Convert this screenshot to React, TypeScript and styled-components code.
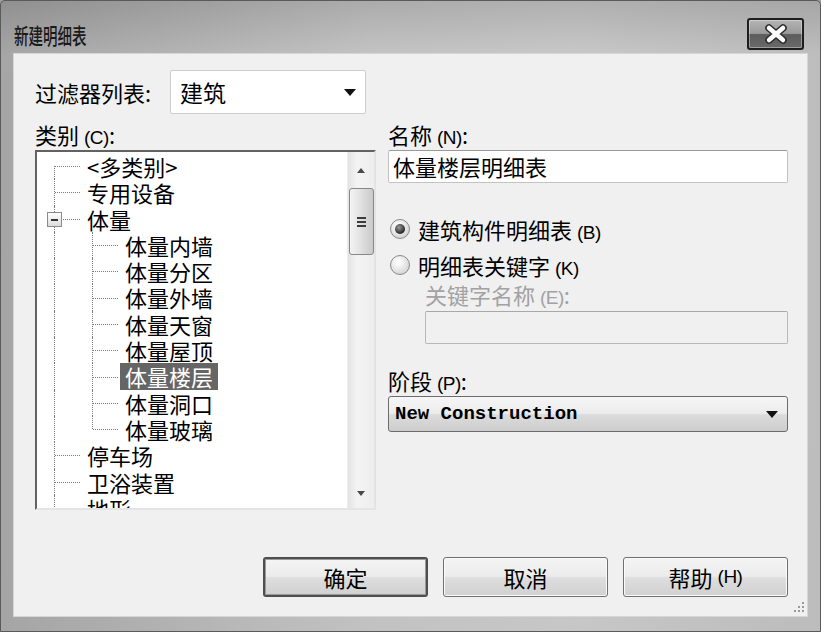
import React from "react";
import styled, { createGlobalStyle, css } from "styled-components";

const CJK = `"Noto Sans CJK SC", "Noto Sans", sans-serif`;

const GlobalStyle = createGlobalStyle`
  html, body { margin: 0; padding: 0; }
  body {
    width: 821px; height: 632px; overflow: hidden;
    background: #9c9c9c;
    font-family: ${CJK};
    color: #000;
  }
  * { box-sizing: border-box; }
`;

const Window = styled.div`
  width: 821px;
  height: 632px;
  display: flex;
  flex-direction: column;
  padding: 0 12px 14px;
  border: 1px solid #5a5a5a;
  border-radius: 5px 5px 0 0;
  background:
    linear-gradient(to bottom, rgba(0,0,0,0.10), rgba(255,255,255,0.06) 52px, rgba(255,255,255,0.05)),
    linear-gradient(to right, #a0a0a0 0%, #bfbfbf 45%, #c4c4c4 70%, #b9b9b9 100%);
`;

const TitleBar = styled.div`
  height: 52px;
  flex: none;
  display: flex;
  align-items: center;
  justify-content: space-between;
  padding: 14px 4px 0 1px;
`;

const TitleText = styled.div`
  font-size: 22px;
  font-weight: 500;
  line-height: 26px;
  color: #1a1a1a;
  transform: scaleX(0.66);
  transform-origin: left center;
  white-space: nowrap;
`;

const CloseButton = styled.div`
  width: 57px;
  height: 32px;
  border: 2px solid #1e1e1e;
  border-radius: 3px;
  background: linear-gradient(to bottom, #b4b4b4 0%, #9a9a9a 48%, #5c5c5c 52%, #6a6a6a 100%);
  box-shadow: inset 0 0 0 1px rgba(255,255,255,0.35);
  display: flex;
  align-items: center;
  justify-content: center;
`;

const Client = styled.div`
  flex: 1;
  position: relative;
  display: flex;
  flex-direction: column;
  background: #f0f0f0;
  border: 1px solid #d6d6d6;
  padding: 16px 19px 0 21px;
`;

const FilterRow = styled.div`
  display: flex;
  align-items: center;
  height: 44px;
`;

const Label = styled.div<{ $disabled?: boolean; $indent?: number; $mt?: number }>`
  font-size: 22px;
  line-height: 24px;
  height: 24px;
  white-space: nowrap;
  color: ${(p) => (p.$disabled ? "#a2a2a2" : "#000")};
  padding-left: ${(p) => p.$indent ?? 0}px;
  margin-top: ${(p) => p.$mt ?? 0}px;
`;

const FixedLabel = styled(Label)`
  width: 135px;
`;

const Mnemonic = styled.span`
  font-family: "Liberation Sans", sans-serif;
  font-size: 19px;
  margin-left: 5px;
  letter-spacing: -0.5px;
`;

const Combo = styled.div`
  width: 196px;
  height: 44px;
  background: #fff;
  border: 1px solid #cdcdcd;
  border-radius: 2px;
  display: flex;
  align-items: center;
  justify-content: space-between;
  padding: 0 9px 0 9px;
  font-size: 23px;
`;

const DownTriangle = styled.span<{ $size?: number }>`
  width: 0;
  height: 0;
  border-left: ${(p) => (p.$size ?? 11) / 2}px solid transparent;
  border-right: ${(p) => (p.$size ?? 11) / 2}px solid transparent;
  border-top: ${(p) => Math.round((p.$size ?? 11) * 0.55)}px solid #111;
`;

const Main = styled.div`
  display: grid;
  grid-template-columns: 341px 400px;
  column-gap: 12px;
  margin-top: 8px;
`;

const Column = styled.div`
  display: flex;
  flex-direction: column;
`;

const ListBox = styled.div`
  margin-top: 4px;
  width: 341px;
  height: 360px;
  display: flex;
  background: #fff;
  border: 2px solid;
  border-color: #626262 #e4e4e4 #e4e4e4 #626262;
`;

const Tree = styled.div`
  flex: 1;
  overflow: hidden;
  padding-top: 1px;
`;

const Row = styled.div`
  display: flex;
  height: 26.3px;
  align-items: stretch;
`;

type VMode = "none" | "full" | "top" | "bottom";

const Guide = styled.span<{ $w: number; $v: VMode; $h: boolean }>`
  position: relative;
  flex: none;
  width: ${(p) => p.$w}px;
  &::before {
    content: "";
    display: ${(p) => (p.$v === "none" ? "none" : "block")};
    position: absolute;
    left: 17px;
    top: ${(p) => (p.$v === "bottom" ? "50%" : "0")};
    bottom: ${(p) => (p.$v === "top" ? "50%" : "0")};
    border-left: 1px dotted #7c7c7c;
  }
  &::after {
    content: "";
    display: ${(p) => (p.$h ? "block" : "none")};
    position: absolute;
    left: 18px;
    right: 2px;
    top: 50%;
    border-top: 1px dotted #7c7c7c;
  }
`;

const Expander = styled.span`
  position: absolute;
  z-index: 1;
  left: 10px;
  top: 50%;
  margin-top: -7px;
  width: 15px;
  height: 15px;
  border: 1px solid #8a8a8a;
  background: linear-gradient(to bottom, #ffffff, #dcdcdc);
  &::after {
    content: "";
    position: absolute;
    left: 3px;
    right: 3px;
    top: 6px;
    height: 2px;
    background: #333;
  }
`;

const ItemLabel = styled.span<{ $selected?: boolean }>`
  font-size: 22px;
  line-height: 26.3px;
  padding: 0 5px;
  white-space: nowrap;
  ${(p) =>
    p.$selected &&
    css`
      background: #656565;
      color: #fff;
    `}
`;

const ScrollBar = styled.div`
  width: 27px;
  flex: none;
  display: flex;
  flex-direction: column;
  align-items: center;
  background: linear-gradient(to right, #e4e4e4, #f3f3f3 35%, #eeeeee);
  border-left: 1px solid #ececec;
`;

const ScrollButton = styled.div<{ $h: number }>`
  height: ${(p) => p.$h}px;
  width: 100%;
  display: flex;
  align-items: center;
  justify-content: center;
`;

const ArrowUp = styled.span`
  width: 0;
  height: 0;
  border-left: 4px solid transparent;
  border-right: 4px solid transparent;
  border-bottom: 5px solid #4a4a4a;
`;

const ArrowDown = styled.span`
  width: 0;
  height: 0;
  border-left: 4px solid transparent;
  border-right: 4px solid transparent;
  border-top: 5px solid #4a4a4a;
`;

const Thumb = styled.div`
  width: 25px;
  height: 67px;
  border: 1px solid #888;
  border-radius: 3px;
  background: linear-gradient(to right, #f4f4f4, #e2e2e2 45%, #c9c9c9);
  display: flex;
  align-items: center;
  justify-content: center;
`;

const Grip = styled.span`
  width: 9px;
  height: 10px;
  background: repeating-linear-gradient(to bottom, #3c3c3c 0 2px, transparent 2px 4px);
`;

const Track = styled.div`
  flex: 1;
`;

const TextInput = styled.div<{ $disabled?: boolean; $indent?: number }>`
  margin-top: ${(p) => (p.$disabled ? 5 : 4)}px;
  margin-left: ${(p) => p.$indent ?? 0}px;
  height: 33px;
  background: ${(p) => (p.$disabled ? "#f0f0f0" : "#fff")};
  border: 1px solid ${(p) => (p.$disabled ? "#b8b8b8" : "#c2c2c2")};
  border-top-color: ${(p) => (p.$disabled ? "#a8a8a8" : "#9a9a9a")};
  border-radius: 2px;
  font-size: 22px;
  line-height: 31px;
  padding: 0 4px;
  white-space: nowrap;
`;

const RadioRow = styled.div<{ $mt: number }>`
  margin-top: ${(p) => p.$mt}px;
  height: 30px;
  display: flex;
  align-items: center;
  gap: 8px;
  padding-left: 2px;
  font-size: 22px;
  white-space: nowrap;
`;

const RadioDot = styled.span<{ $on: boolean }>`
  width: 20px;
  height: 20px;
  border-radius: 50%;
  border: 1px solid #8a8a8a;
  background: radial-gradient(circle at 40% 35%, #fdfdfd 10%, #cfcfcf 85%);
  display: flex;
  align-items: center;
  justify-content: center;
  &::after {
    content: "";
    display: ${(p) => (p.$on ? "block" : "none")};
    width: 10px;
    height: 10px;
    border-radius: 50%;
    background: radial-gradient(circle at 40% 35%, #9a9a9a, #1e1e1e 75%);
  }
`;

const PhaseSelect = styled.div`
  margin-top: 4px;
  height: 36px;
  border: 1px solid #6c6c6c;
  border-radius: 3px;
  background: linear-gradient(to bottom, #f6f6f6 0%, #ececec 48%, #dcdcdc 52%, #cdcdcd 100%);
  display: flex;
  align-items: center;
  justify-content: space-between;
  padding: 0 9px 0 6px;
  font-family: "Liberation Mono", monospace;
  font-weight: bold;
  font-size: 19px;
  white-space: nowrap;
`;

const ButtonRow = styled.div`
  margin-top: 47px;
  display: flex;
  justify-content: flex-end;
  gap: 15px;
`;

const DialogButton = styled.div<{ $default?: boolean }>`
  width: 165px;
  height: 40px;
  display: flex;
  align-items: center;
  justify-content: center;
  font-size: 22px;
  border: 1px solid #6f6f6f;
  border-radius: 3px;
  background: linear-gradient(to bottom, #f4f4f4 0%, #ececec 48%, #dedede 52%, #d0d0d0 100%);
  box-shadow: inset 0 0 0 1px #fbfbfb;
  ${(p) =>
    p.$default &&
    css`
      border: 2px solid #4e4e4e;
      box-shadow: inset 0 0 0 1px #9a9a9a;
    `}
`;

const ResizeGrip = styled.svg`
  position: absolute;
  right: 2px;
  bottom: 3px;
`;

type TreeItem = {
  label: string;
  depth: 0 | 1;
  v: VMode;
  expander?: boolean;
  selected?: boolean;
};

const items: TreeItem[] = [
  { label: "<多类别>", depth: 0, v: "bottom" },
  { label: "专用设备", depth: 0, v: "full" },
  { label: "体量", depth: 0, v: "full", expander: true },
  { label: "体量内墙", depth: 1, v: "full" },
  { label: "体量分区", depth: 1, v: "full" },
  { label: "体量外墙", depth: 1, v: "full" },
  { label: "体量天窗", depth: 1, v: "full" },
  { label: "体量屋顶", depth: 1, v: "full" },
  { label: "体量楼层", depth: 1, v: "full", selected: true },
  { label: "体量洞口", depth: 1, v: "full" },
  { label: "体量玻璃", depth: 1, v: "top" },
  { label: "停车场", depth: 0, v: "full" },
  { label: "卫浴装置", depth: 0, v: "full" },
  { label: "地形", depth: 0, v: "full" },
];

function TreeRow({ item }: { item: TreeItem }) {
  return (
    <Row>
      {item.depth === 0 ? (
        <Guide $w={45} $v={item.v} $h>
          {item.expander && <Expander />}
        </Guide>
      ) : (
        <>
          <Guide $w={38} $v="full" $h={false} />
          <Guide $w={45} $v={item.v} $h />
        </>
      )}
      <ItemLabel $selected={item.selected}>{item.label}</ItemLabel>
    </Row>
  );
}

export default function App() {
  return (
    <>
      <GlobalStyle />
      <Window>
        <TitleBar>
          <TitleText>新建明细表</TitleText>
          <CloseButton>
            <svg width="26" height="20" viewBox="0 0 26 20">
              <path d="M6 4 L20 16 M20 4 L6 16" stroke="#2a2a2a" strokeWidth="7.5" strokeLinecap="round" />
              <path d="M6 4 L20 16 M20 4 L6 16" stroke="#ffffff" strokeWidth="4.5" strokeLinecap="round" />
            </svg>
          </CloseButton>
        </TitleBar>
        <Client>
          <FilterRow>
            <FixedLabel>过滤器列表:</FixedLabel>
            <Combo>
              <span>建筑</span>
              <DownTriangle $size={12} />
            </Combo>
          </FilterRow>
          <Main>
            <Column>
              <Label>
                类别<Mnemonic>(C)</Mnemonic>:
              </Label>
              <ListBox>
                <Tree>
                  {items.map((it) => (
                    <TreeRow key={it.label} item={it} />
                  ))}
                </Tree>
                <ScrollBar>
                  <ScrollButton $h={36}>
                    <ArrowUp />
                  </ScrollButton>
                  <Thumb>
                    <Grip />
                  </Thumb>
                  <Track />
                  <ScrollButton $h={30}>
                    <ArrowDown />
                  </ScrollButton>
                </ScrollBar>
              </ListBox>
            </Column>
            <Column>
              <Label>
                名称<Mnemonic>(N)</Mnemonic>:
              </Label>
              <TextInput>体量楼层明细表</TextInput>
              <RadioRow $mt={31}>
                <RadioDot $on />
                <span>
                  建筑构件明细表<Mnemonic>(B)</Mnemonic>
                </span>
              </RadioRow>
              <RadioRow $mt={6}>
                <RadioDot $on={false} />
                <span>
                  明细表关键字<Mnemonic>(K)</Mnemonic>
                </span>
              </RadioRow>
              <Label $disabled $indent={37} $mt={2}>
                关键字名称<Mnemonic>(E)</Mnemonic>:
              </Label>
              <TextInput $disabled $indent={37} />
              <Label $mt={24}>
                阶段<Mnemonic>(P)</Mnemonic>:
              </Label>
              <PhaseSelect>
                <span>New Construction</span>
                <DownTriangle $size={12} />
              </PhaseSelect>
            </Column>
          </Main>
          <ButtonRow>
            <DialogButton $default>确定</DialogButton>
            <DialogButton>取消</DialogButton>
            <DialogButton>
              帮助<Mnemonic>(H)</Mnemonic>
            </DialogButton>
          </ButtonRow>
          <ResizeGrip width="14" height="14" viewBox="0 0 14 14">
            {[
              [11, 3],
              [7, 7],
              [11, 7],
              [3, 11],
              [7, 11],
              [11, 11],
            ].map(([x, y]) => (
              <rect key={`${x}-${y}`} x={x} y={y} width="2" height="2" fill="#9a9a9a" />
            ))}
          </ResizeGrip>
        </Client>
      </Window>
    </>
  );
}
